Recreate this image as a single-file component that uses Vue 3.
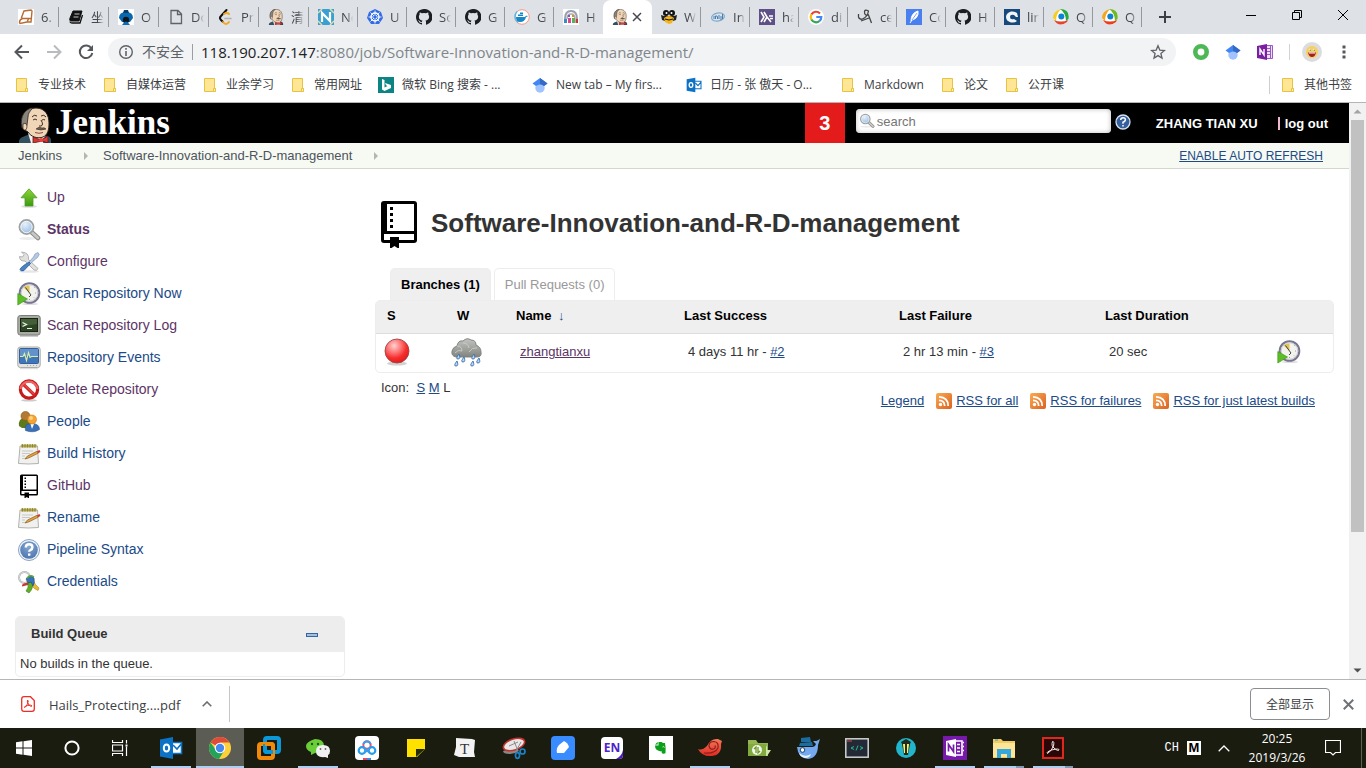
<script setup>
import { ref } from 'vue'

const tabs = [
  { icon: 'sketch', title: '6.' },
  { icon: 'book', title: '坐' },
  { icon: 'sailor', title: 'O' },
  { icon: 'page', title: 'Do' },
  { icon: 'leet', title: 'Pr' },
  { icon: 'butler', title: '清' },
  { icon: 'ntile', title: 'Ne' },
  { icon: 'helm', title: 'U' },
  { icon: 'github', title: 'So' },
  { icon: 'github', title: 'G' },
  { icon: 'docker', title: 'G' },
  { icon: 'crowd', title: 'H' },
  { icon: 'butler', title: '', active: true },
  { icon: 'gopher', title: 'W' },
  { icon: 'intel', title: 'In' },
  { icon: 'haskell', title: 'ha' },
  { icon: 'google', title: 'di' },
  { icon: 'script', title: 'ce' },
  { icon: 'feather', title: 'Co' },
  { icon: 'github', title: 'H' },
  { icon: 'cblue', title: 'lin' },
  { icon: 'swirlA', title: 'Q' },
  { icon: 'swirlB', title: 'Q' }
]

const bookmarks = [
  { icon: 'folder', label: '专业技术' },
  { icon: 'folder', label: '自媒体运营' },
  { icon: 'folder', label: '业余学习' },
  { icon: 'folder', label: '常用网址' },
  { icon: 'bing', label: '微软 Bing 搜索 - ...', wide: true },
  { icon: 'scholar', label: 'New tab – My firs...', wide: true },
  { icon: 'outlook', label: '日历 - 张 傲天 - O...', wide: true },
  { icon: 'folder', label: 'Markdown' },
  { icon: 'folder', label: '论文' },
  { icon: 'folder', label: '公开课' }
]

const tasks = [
  { icon: 'up', label: 'Up', visited: true },
  { icon: 'search', label: 'Status', visited: true, current: true },
  { icon: 'tools', label: 'Configure', visited: true },
  { icon: 'clock', label: 'Scan Repository Now' },
  { icon: 'terminal', label: 'Scan Repository Log', visited: true },
  { icon: 'monitor', label: 'Repository Events' },
  { icon: 'forbid', label: 'Delete Repository', visited: true },
  { icon: 'people', label: 'People' },
  { icon: 'notepad', label: 'Build History' },
  { icon: 'repo', label: 'GitHub', visited: true },
  { icon: 'notepad', label: 'Rename' },
  { icon: 'helpbig', label: 'Pipeline Syntax' },
  { icon: 'keys', label: 'Credentials' }
]

const apps = [
  { icon: 'outlook', name: 'Outlook', size: 's24', open: true },
  { icon: 'chrome', name: 'Chrome', size: 's24', current: true },
  { icon: 'vmware', name: 'VMware', size: 's24' },
  { icon: 'wechat', name: 'WeChat', size: 's24', open: true },
  { icon: 'cloud', name: 'Cloud drive', size: 's24' },
  { icon: 'sticky', name: 'Sticky notes', size: 's20' },
  { icon: 'typora', name: 'Typora', size: 's24' },
  { icon: 'snip', name: 'Snipping tool', size: 's24' },
  { icon: 'bluepen', name: 'Notes', size: 's24' },
  { icon: 'endict', name: 'Dictionary', size: 's24' },
  { icon: 'evernote', name: 'Evernote', size: 's24' },
  { icon: 'shell', name: 'Nautilus', size: 's24', open: true },
  { icon: 'gfolder', name: 'Sync folder', size: 's24' },
  { icon: 'whale', name: 'Kitematic', size: 's24' },
  { icon: 'code', name: 'Terminal', size: 's24' },
  { icon: 'lantern', name: 'Lantern', size: 's24' },
  { icon: 'onenote', name: 'OneNote', size: 's24', open: true },
  { icon: 'explorer', name: 'Explorer', size: 's24', open: true, stacked: true },
  { icon: 'acrobat', name: 'Acrobat', size: 's24', open: true, stacked: true }
]

const feeds = ['RSS for all', 'RSS for failures', 'RSS for just latest builds']
const query = ref('')
</script>

<template>
  <div class="screen">
    <svg class="sprite" aria-hidden="true">
      <defs>
        <linearGradient id="gGreen" x1="0" y1="0" x2="0" y2="1"><stop offset="0" stop-color="#8fd63a" /><stop offset="1" stop-color="#3b9a10" /></linearGradient>
        <linearGradient id="gCloud" x1="0" y1="0" x2="0" y2="1"><stop offset="0" stop-color="#c2c4c1" /><stop offset="1" stop-color="#82857f" /></linearGradient>
        <linearGradient id="gRss" x1="0" y1="0" x2="1" y2="1"><stop offset="0" stop-color="#f8ab52" /><stop offset="1" stop-color="#dd6121" /></linearGradient>
        <linearGradient id="gShell" x1="0" y1="0" x2="0" y2="1"><stop offset="0" stop-color="#f6795a" /><stop offset="1" stop-color="#e02a22" /></linearGradient>
        <radialGradient id="gBall" cx=".38" cy=".28" r=".75"><stop offset="0" stop-color="#ffd2d2" /><stop offset=".35" stop-color="#ff7f7f" /><stop offset=".7" stop-color="#f52c2c" /><stop offset="1" stop-color="#e01c1c" /></radialGradient>
        <radialGradient id="gLens" cx=".4" cy=".3" r=".8"><stop offset="0" stop-color="#e6f1fc" /><stop offset="1" stop-color="#8eb4e0" /></radialGradient>
        <radialGradient id="gHelp" cx=".5" cy=".3" r=".8"><stop offset="0" stop-color="#86a8d4" /><stop offset="1" stop-color="#4670a8" /></radialGradient>

        <symbol id="butler" viewBox="0 0 34 36">
          <path d="M1 36q-1-5 6-7l5-2h13l4 2q5 1 4 7z" fill="#335061" />
          <path d="M10 26l3 10h12l2-8-4-5z" fill="#f4f2ee" />
          <path d="M5 20C2 9 7 1 18 1c9 0 13 7 13 15 0 6-1 12-6 14-5 2-12 0-15-5-2-1-4-3-5-5z" fill="#f0d6b7" stroke="#2c2320" stroke-width="1" />
          <path d="M4 21C1 9 8 1 15 1c-3 3-5 5-5 9l-1 8-2 4z" fill="#88847c" stroke="#2c2320" stroke-width=".8" />
          <path d="M5 17q4-2 4 3-1 5-4 2z" fill="#f0d6b7" stroke="#2c2320" stroke-width=".7" />
          <path d="M14 10q2-3 5-1m4 0q3-2 5 1M15 13q2-2 4 0m5 0q2-1 3 0M23 13q3 5 0 6h-2" fill="none" stroke="#3a2b25" stroke-width="1" />
          <path d="M18 22q3-3 6-1 2-1 4 1-5 2-10 0z" fill="#6b5b50" stroke="#3a2b25" stroke-width=".6" />
          <path d="M17 25.500q4 1.500 8 0" fill="none" stroke="#8a4a3d" />
          <path d="M15 30l8 3 7-4v7l-6-2-9 2z" fill="#d33833" stroke="#641512" stroke-width=".8" />
          <circle cx="23" cy="33" r="2" fill="#ef3d3a" />
        </symbol>
        <symbol id="sketch" viewBox="0 0 16 16"><path fill="#fff" d="M0 0h16v16H0z" /><path d="M1.500 13.500q0-3 3-4l-1-1L6 2l7-1 1 1-1 11h-4l-7 1.500zM4 9.500h10M9 13l2-4" fill="none" stroke="#b66d35" stroke-width="1.400" /></symbol>
        <symbol id="book" viewBox="0 0 16 16"><path d="M5 2h9l-3 10H3q-2 0-1-3z" fill="#111" stroke="#111" stroke-linejoin="round" /><path d="M6.500 5h5M5.500 8h5" stroke="#ddd" stroke-width=".9" /><path d="M2 12.500q0 1.500 2 1.500h8l2.500-8" fill="none" stroke="#111" stroke-width="1.300" /></symbol>
        <symbol id="sailor" viewBox="0 0 16 16"><path fill="#fff" d="M0 0h16v16H0z" /><path d="M1 9q0-6 7-6t7 6l-3 4H4z" fill="#0868b0" /><path d="M6 1h4l1 3H5z" fill="#0a3d69" /><circle cx="8" cy="11" r="3.200" fill="#10151a" /><path d="M4 16q4-7 8 0z" fill="#086cb6" /></symbol>
        <symbol id="page" viewBox="0 0 16 16"><path d="M3 1.500h7l3.500 3.500v9.500H3zM9.500 1.500v4h4" fill="none" stroke="#5f6368" stroke-width="1.300" /></symbol>
        <symbol id="leet" viewBox="0 0 16 16"><path d="M8.500 1L3 7q-2 2 0 4l2 2" fill="none" stroke="#111" stroke-width="2" stroke-linecap="round" /><path d="M5 13q3 4 6 0m-5-8q3-2 5 0" fill="none" stroke="#f7a51c" stroke-width="2" stroke-linecap="round" /><path d="M7 9.500h6" stroke="#b3b3b3" stroke-width="1.700" stroke-linecap="round" /></symbol>
        <symbol id="ntile" viewBox="0 0 16 16"><path fill="#3aa0d1" d="M0 0h16v16H0z" /><path d="M0 4l4-4M12 0l4 4M0 12l4 4M16 12l-4 4" fill="none" stroke="#e4dca4" stroke-width="1.500" /><path d="M4 13V4l8 8V3" fill="none" stroke="#fff" stroke-width="2.200" /></symbol>
        <symbol id="helm" viewBox="0 0 16 16"><path d="M8 0l6 3 2 6-4 6H4L0 9l2-6z" fill="#326ce5" /><circle cx="8" cy="8" r="4" fill="none" stroke="#fff" stroke-width="1.400" /><path d="M8 1.500v13M1.500 8h13M3.500 3.500l9 9m0-9l-9 9" stroke="#fff" stroke-width=".9" /><circle cx="8" cy="8" r="1.400" fill="#326ce5" /></symbol>
        <symbol id="github" viewBox="0 0 16 16"><path d="M8 0C3.600 0 0 3.600 0 8c0 3.500 2.300 6.500 5.500 7.600.4.100.5-.2.500-.4v-1.400c-2.200.5-2.700-.9-2.700-.9-.4-1-.9-1.200-.9-1.200-.7-.5.100-.5.100-.5.800.1 1.200.8 1.200.8.700 1.300 1.900.9 2.300.7.100-.5.300-.9.500-1.100-1.800-.2-3.600-.9-3.600-4 0-.9.300-1.600.8-2.100-.1-.2-.4-1 .1-2.100 0 0 .7-.2 2.200.8a7.600 7.600 0 0 1 4 0c1.500-1 2.200-.8 2.200-.8.400 1.100.2 1.900.1 2.100.5.600.8 1.300.8 2.100 0 3.100-1.900 3.800-3.700 4 .3.200.6.700.6 1.500v2.200c0 .2.100.5.600.4A8 8 0 0 0 8 0z" fill="#1b1f23" /></symbol>
        <symbol id="docker" viewBox="0 0 16 16"><circle cx="8" cy="8" r="7.300" fill="#fff" stroke="#f59a8b" /><path d="M3 2.500a7.500 7.500 0 0 0 1 11" fill="none" stroke="#51b9e8" stroke-width="1.300" /><path d="M2 8h9q1-2 3-1-1 1-2 1-1 5-6 5-4 0-4-5zM4 5.500h5V7H4zM6 3.500h3V5H6z" fill="#1488c6" /></symbol>
        <symbol id="crowd" viewBox="0 0 16 16"><path fill="#fff" d="M0 0h16v16H0z" /><path d="M2 10q0-8 6-8t6 8" fill="none" stroke="#999fb0" stroke-width="2" /><path d="M4 10q0-5 4-5t4 5" fill="none" stroke="#aaa" stroke-width="1.500" /><path d="M1 10h3v4H1z" fill="#3a8bc9" /><path d="M5 9h3v5H5z" fill="#d94a8b" /><path d="M9 9h3v5H9z" fill="#56b45a" /><path d="M12.500 10H15v4h-2.500z" fill="#c43b3b" /><path d="M5 6h2v2H5z" fill="#7f56c2" /><path d="M9 6h2v2H9z" fill="#e58d2a" /></symbol>
        <symbol id="gopher" viewBox="0 0 16 16"><ellipse cx="5" cy="4" rx="3" ry="3" fill="#111" /><ellipse cx="11" cy="4" rx="3" ry="3" fill="#111" /><path d="M0 6l3 1h10l3-1-1 5-3 1H4l-3-1z" fill="#222" /><circle cx="5.500" cy="4" r="1" fill="#fff" /><circle cx="10.500" cy="4" r="1" fill="#fff" /><path d="M3 9q5-4 10 0l-2 5-3 1-4-2z" fill="#f3b51a" /><path d="M4 10q4 2 8 0" fill="none" stroke="#111" /></symbol>
        <symbol id="intel" viewBox="0 0 16 16"><ellipse cx="8" cy="8" rx="6.500" ry="4" fill="none" stroke="#7fa9cf" stroke-width="1.200" transform="rotate(-12 8 8)" /><path d="M4 7v3m1.500-3v3m0-3q2-.5 2 1v2M9 6v4m1-2h2m-2 2h2m.5-5v5" fill="none" stroke="#3277b0" stroke-width=".9" /></symbol>
        <symbol id="haskell" viewBox="0 0 16 16"><path fill="#5e5086" d="M0 0h16v16H0z" /><path d="M2 3l3 5-3 5M5 3l3 5-3 5m3-5l4 5M10 7h4m-3 2.500h3" fill="none" stroke="#fff" stroke-width="1.600" /></symbol>
        <symbol id="google" viewBox="0 0 16 16"><circle cx="8" cy="8" r="8" fill="#fff" /><path d="M12 4.500A5.300 5.300 0 0 0 3.400 5.500" fill="none" stroke="#ea4335" stroke-width="2.200" /><path d="M3.400 5.400a5.300 5.300 0 0 0 0 5.200" fill="none" stroke="#fbbc05" stroke-width="2.200" /><path d="M3.400 10.500a5.300 5.300 0 0 0 8.100 1.500" fill="none" stroke="#34a853" stroke-width="2.200" /><path d="M11.500 12q1.800-1.500 1.800-4H8.300" fill="none" stroke="#4285f4" stroke-width="2.200" /></symbol>
        <symbol id="script" viewBox="0 0 16 16"><path d="M1.500 5v3q1 3 4 2 5-2 6-8-4-2-4 1 0 4 4 3l3 8M4 12l8-3" fill="none" stroke="#444" stroke-width="1.300" /></symbol>
        <symbol id="feather" viewBox="0 0 16 16"><path fill="#4a7ff0" d="M0 0h16v16H0z" /><path d="M5 12q0-8 7-10 1 7-6 9zM4 14l2-3" fill="#fff" stroke="#fff" /><path d="M6 11l5-7" stroke="#4a7ff0" stroke-width=".7" /></symbol>
        <symbol id="cblue" viewBox="0 0 16 16"><path fill="#18497c" d="M0 0h16v16H0z" /><path d="M13 4Q11 2 7 2.500 2 4 2 8t5 5.500q4 .5 6-1.500l-3-2q-4 1-4-2t4-2l2 2h2z" fill="#f1f6fa" /></symbol>
        <symbol id="swirlA" viewBox="0 0 16 16"><circle cx="8" cy="8" r="7.500" fill="#fff" /><path d="M8 0Q0 2 0 9l3 3Q3 5 8 0z" fill="#f3ce24" /><path d="M7 0q10 0 8.500 10L13 12Q13 4 7 0z" fill="#27a844" /><path d="M1 11q5 8 13 2l1-2q-7 3-14 0z" fill="#e6452e" /><circle cx="8.300" cy="7.500" r="3" fill="#0d83cf" /></symbol>
        <symbol id="swirlB" viewBox="0 0 16 16"><circle cx="8" cy="8" r="7.500" fill="#fff" /><path d="M8 0Q0 2 0 9l3 3Q3 5 8 0z" fill="#f4a71e" /><path d="M7 0q10 0 8.500 10L13 12Q13 4 7 0z" fill="#6cba20" /><path d="M1 11q5 8 13 2l1-2q-7 3-14 0z" fill="#f03d19" /><circle cx="8.300" cy="7.500" r="3" fill="#0d83cf" /></symbol>

        <symbol id="folder" viewBox="0 0 16 16"><path d="M2.500 1.500h10v10h1v3h-11z" fill="#ffe694" stroke="#e6c342" /><path d="M11.500 14.500v-3h2v3z" fill="#fff0b8" stroke="#e6c342" /></symbol>
        <symbol id="bing" viewBox="0 0 16 16"><path fill="#0c8484" d="M0 0h16v16H0z" /><path d="M4 2l2.500 1v7.500L9.500 9 8 8.300 7 6l6 2v3l-6.500 3L4 12.500z" fill="#fff" /></symbol>
        <symbol id="scholar" viewBox="0 0 16 16"><circle cx="8" cy="11" r="4.700" fill="#a0c3ff" /><path d="M8 1L.5 6.500 4 9q4-3 8 0l3.500-2.500z" fill="#4285f4" /><path d="M8 1v6q2 0 4 2l3.500-2.500z" fill="#356ac3" /></symbol>
        <symbol id="outlook" viewBox="0 0 24 24"><path fill="#fff" d="M12 6h11v12H12z" /><path d="M12 6.500h10.500v11H12M14 9l4 4 5-6" fill="none" stroke="#0c72c6" stroke-width="1.600" /><path d="M1 3.500L14 1v22L1 20.500z" fill="#0c72c6" /><ellipse cx="7.500" cy="12" rx="2.700" ry="3.600" fill="none" stroke="#fff" stroke-width="2" /></symbol>
        <symbol id="onenote16" viewBox="0 0 16 16"><path d="M9 1.500h6.500v13H9M10 4.500h4m-4 3h4m-4 3h4M13.500 1.500v13" stroke="#9a58c4" fill="#ecdff5" /><path d="M0 2l10-2v16L0 14z" fill="#7a1fa2" /><path d="M3 11V5l4 6V5" fill="none" stroke="#fff" stroke-width="1.400" /></symbol>
        <symbol id="smile" viewBox="0 0 20 20"><circle cx="10" cy="10" r="10" fill="#dcdcde" /><circle cx="10" cy="10" r="6" fill="#f8cf5a" /><path d="M6 10.500h8q-1 4.500-4 4.500t-4-4.500z" fill="#a32020" /><path d="M7 10.500h6v1H7z" fill="#fff" /><circle cx="8" cy="8" r="1.200" fill="#fff" /><circle cx="12" cy="8" r="1.200" fill="#fff" /><circle cx="8.200" cy="8.200" r=".6" fill="#332" /><circle cx="12.200" cy="8.200" r=".6" fill="#332" /></symbol>

        <symbol id="up" viewBox="0 0 24 24"><ellipse cx="12" cy="20.500" rx="8" ry="1.300" fill="#ddd" /><path d="M12 2.800l8 9h-4V20H8v-8.200H4z" fill="url(#gGreen)" stroke="#4f9a26" stroke-width=".8" /></symbol>
        <symbol id="search" viewBox="0 0 24 24"><ellipse cx="11" cy="20.500" rx="9" ry="1.500" fill="#ececec" /><path d="M15 14.500l6 5.500" stroke="#8b8d8a" stroke-width="4.500" stroke-linecap="round" /><path d="M15 14.500l6 5.500" stroke="#c8c9c7" stroke-width="2.500" stroke-linecap="round" /><circle cx="9.500" cy="9" r="7" fill="url(#gLens)" stroke="#9fa19f" stroke-width="1.900" /><circle cx="9.500" cy="9" r="5.700" fill="none" stroke="#fff" stroke-width=".8" /></symbol>
        <symbol id="tools" viewBox="0 0 24 24"><ellipse cx="12" cy="21.500" rx="10" ry="1.300" fill="#e6e6e6" /><path d="M4.500 2L7 4.500 5.500 7 2.500 6.500q0 5 5.500 4.500l9 9q3 1.500 4-1.500l-9.500-9q1-7-7-7.500z" fill="#e0e1df" stroke="#a2a4a1" stroke-width=".8" /><path d="M21 2.500l-3 1.500-1.500 3L12 12l1.500 1.500L18.500 9l2-1.500 1.700-3z" fill="#b4cae2" stroke="#8aa1bd" stroke-width=".8" /><path d="M12 12l1.500 1.500L7 20.500q-3 1.500-4-1 0-2 9-7.500z" fill="#4a82c6" stroke="#2a5898" stroke-width=".8" /></symbol>
        <symbol id="clock" viewBox="0 0 24 24"><ellipse cx="13" cy="22" rx="8" ry="1" fill="#ddd" /><circle cx="12.500" cy="11" r="9.800" fill="#f3f3ee" stroke="#77758f" stroke-width="2" /><circle cx="12.500" cy="11" r="8.300" fill="none" stroke="#c9c8d3" /><path d="M12.500 11L6.500 5.500q3-2.500 6-2z" fill="#e0c45a" /><path d="M8.500 5.500l4 5.500 1.500 2-2 2" stroke="#333" stroke-width=".9" fill="none" /><path d="M18 11h1M12.500 17v1M17 6l.6-.6M17 15.500l.6.600" stroke="#888" stroke-width=".8" /><path d="M.8 11.500L10.500 17 .8 23z" fill="#5cbd27" stroke="#479c1b" stroke-width=".7" /></symbol>
        <symbol id="terminal" viewBox="0 0 24 24"><path d="M3 22h18" stroke="#ccc" stroke-width="2" /><rect x=".8" y="1.500" width="22.400" height="19.500" rx="2.500" fill="#a9aba5" stroke="#7b7d78" /><rect x="3.500" y="4.500" width="17" height="13" fill="#2c4424" stroke="#182410" /><path d="M4 5h16v5L4 12.500z" fill="#55704a" opacity=".6" /><path d="M5.500 8.500l4 2-4 2M10 14.500h5" fill="none" stroke="#eef5e8" stroke-width="1.200" /></symbol>
        <symbol id="monitor" viewBox="0 0 24 24"><path d="M3 22.500h18" stroke="#ddd" stroke-width="1.500" /><rect x=".8" y="1" width="22.400" height="20.500" rx="2.500" fill="#e2e3e0" stroke="#a9aba6" /><rect x="2.500" y="2.500" width="19" height="15" rx="1" fill="#3f76bb" stroke="#31609c" /><path d="M3 3h18v7H3z" fill="#7aa4d6" opacity=".6" /><path d="M3 10.500h3l1.500-3 2 7 2-8 1.500 5 1.500-1H21" fill="none" stroke="#d9efa0" stroke-width="1.100" /><path d="M10 19.500h10" stroke="#aaa" stroke-dasharray="1 2" /></symbol>
        <symbol id="forbid" viewBox="0 0 24 24"><ellipse cx="12" cy="22.300" rx="8" ry="1.200" fill="#ccc" /><circle cx="12" cy="11.500" r="8.600" fill="#fff" stroke="#c41a1a" stroke-width="3.200" /><path d="M6 6l12 11.500" stroke="#d42424" stroke-width="3.200" /><path d="M3.500 11A8.600 8.600 0 0 1 20.500 11" fill="none" stroke="#ee6464" stroke-width="2.200" /><path d="M7 6.500l10 9.500" stroke="#e04545" stroke-width="1.600" /></symbol>
        <symbol id="people" viewBox="0 0 24 24"><path d="M2 16q-1-8 6-8t7 8l-5 2H5z" fill="#5c7a1c" /><circle cx="8.500" cy="6" r="4.500" fill="#b37a34" stroke="#86500e" stroke-width=".6" /><path d="M8.500 20.500q-2-7 6-7t8 6q-6 4-14 1z" fill="#3a70b8" stroke="#28538c" stroke-width=".6" /><path d="M13.500 14l1.500 5 2-5z" fill="#fff" /><circle cx="15" cy="9.500" r="4.500" fill="#f5a431" stroke="#cb7a12" stroke-width=".6" /><circle cx="14" cy="8" r="2" fill="#ffd083" /></symbol>
        <symbol id="notepad" viewBox="0 0 24 24"><path d="M3 4h17.500l1 17.500q-10.500 1-20 0z" fill="#f0f0ee" stroke="#a9aaa6" stroke-width=".9" /><path d="M4 2.500h15.500v3H4z" fill="#b5a84a" /><path d="M5.500 2v3.500M8 2v3.500M10.500 2v3.500M13 2v3.500M15.500 2v3.500M18 2v3.500" stroke="#857b2c" stroke-width=".8" /><path d="M5 9h11M5 11.500h8M5 14h3M5 16.500h5" stroke="#c4c4c4" stroke-width=".9" /><path d="M8 17l2.500-3L20 9.300l1 2-9 4.500z" fill="#e0a142" stroke="#9a6b26" stroke-width=".8" /><path d="M20 9.300l2.500-1.300 1 2-2.500 1.300z" fill="#cd3b30" /></symbol>
        <symbol id="repo" viewBox="0 0 24 24"><path d="M4.500.5h15Q21 .5 21 2v18q0 1.500-1.500 1.500H12v3L9.750 23 7.500 24.500v-3h-3Q3 21.500 3 20V2Q3 .5 4.500.5z" fill="#000" /><path d="M6 2h13.500v13.500H6zM4.500 17h15v3H12v-1.500H7.500V20h-3z" fill="#fff" /><path d="M7.500 3.500H9V5H7.500zm0 3H9V8H7.500zm0 3H9V11H7.500zm0 3H9V14H7.500z" fill="#000" /></symbol>
        <symbol id="helpbig" viewBox="0 0 24 24"><circle cx="12" cy="12" r="10.500" fill="#f2f6fb" stroke="#87a2c7" /><circle cx="12" cy="12" r="8.800" fill="url(#gHelp)" /><path d="M8.800 9.500q0-3.200 3.300-3.200t3.300 3q0 2-2 2.700-1.200.5-1.200 1.800M12.200 15.500v2.300" fill="none" stroke="#fff" stroke-width="2.400" /></symbol>
        <symbol id="keys" viewBox="0 0 24 24"><circle cx="7.500" cy="7.500" r="5.500" fill="none" stroke="#9ea0a2" stroke-width="1.900" /><circle cx="7.500" cy="7.500" r="5.500" fill="none" stroke="#f0f0f0" stroke-width=".9" /><path d="M5 15.500q0-2 6-3l2 2-8 2z" fill="#c9382c" /><path d="M16 10q2 5 6 8l-1 2.500q-7-3-7-8.500z" fill="#e7bc32" stroke="#ad8517" stroke-width=".6" /><path d="M11 12q1 6-2 9l3 2q5-5 3-11z" fill="#5fae25" stroke="#3a7a10" stroke-width=".6" /><path d="M9 9q4-6 8-1 1 5-1 8l-2-4-3 1z" fill="#3673b9" stroke="#204a87" stroke-width=".6" /><path d="M10 8q3-4 7-1" fill="none" stroke="#5fae25" stroke-width="1.400" /></symbol>
        <symbol id="ball" viewBox="0 0 26 28"><ellipse cx="13" cy="25.500" rx="10" ry="2" fill="#d2d2d2" /><circle cx="13" cy="13" r="12" fill="url(#gBall)" stroke="#a14444" stroke-width=".9" /></symbol>
        <symbol id="rain" viewBox="0 0 32 30"><path d="M6 20q-5-1-4-6 1-4 5-5 1-6 6-5 4-4 8-1 5 0 5 5 5 2 5 7 1 5-4 5z" fill="url(#gCloud)" stroke="#7c7f79" stroke-width=".9" /><path d="M7 9q5 0 5 5M13 6q5 0 6 5M19 15q3-5 8-4M5 16q3-4 7-2" fill="none" stroke="#d0d2ce" stroke-width=".8" /><g fill="#bcd5f0" stroke="#3b70b2" stroke-width=".9"><path d="M9 17q-4 5-1 5t1-5zM14 20q-4 5-1 5t1-5zM7 24q-4 5-1 5t1-5zM24 17q-4 5-1 5t1-5zM29 21q-4 5-1 5t1-5zM23 24q-4 5-1 5t1-5z" /></g></symbol>
        <symbol id="rss" viewBox="0 0 16 16"><rect width="16" height="16" rx="2" fill="url(#gRss)" /><circle cx="4.500" cy="11.500" r="1.700" fill="#fff" /><path d="M3 7.300q5.700.2 5.700 5.700M3 3.800q9.200.4 9.200 9.200" fill="none" stroke="#fff" stroke-width="1.800" /></symbol>
        <symbol id="pdf" viewBox="0 0 14 16"><path d="M3 .7h6.500l3.800 3.800V13q0 2.300-2.300 2.300H3Q.7 15.300.7 13V3Q.7.700 3 .7z" fill="#fff" stroke="#ee2d24" stroke-width="1.300" /><path d="M6.500 4q1.500 0 0 4-2 3.500-3 3.500-1-1 3-2 4-1 4.500.5-1 1-3-1-2.500-3-1.500-5z" fill="none" stroke="#ee2d24" /></symbol>

        <symbol id="chrome" viewBox="0 0 24 24"><circle cx="12" cy="12" r="11" fill="#fdd03b" /><path d="M12 12L2.500 6.500A11 11 0 0 1 21.500 6.500H12z" fill="#df4a3b" /><path d="M2.500 6.500A11 11 0 0 0 11 23L16 15 8 14z" fill="#22a35a" /><circle cx="12" cy="12" r="5.300" fill="#fff" /><circle cx="12" cy="12" r="4.200" fill="#4788ee" /></symbol>
        <symbol id="vmware" viewBox="0 0 24 24"><rect x="8" y="2" width="14" height="14" rx="2" fill="none" stroke="#0c98d8" stroke-width="4" /><rect x="2" y="8" width="14" height="14" rx="2" fill="none" stroke="#f28a09" stroke-width="4" /><path d="M8 8v6q0 2 2 2h6" fill="none" stroke="#0c98d8" stroke-width="4" /><path d="M8 8h6q2 0 2 2v3" fill="none" stroke="#f28a09" stroke-width="4" /></symbol>
        <symbol id="wechat" viewBox="0 0 24 24"><path d="M9 3q9 0 9 7t-9 7l-4 2v-3Q0 14 0 10t9-7z" fill="#69ce38" /><circle cx="6" cy="8" r="1.200" fill="#245812" /><circle cx="12" cy="8" r="1.200" fill="#245812" /><path d="M17 9q7 0 7 6 0 3-2 4v3l-3-1q-9 1-9-6 0-6 7-6z" fill="#f0f2f1" /><circle cx="14.500" cy="13" r=".9" fill="#666" /><circle cx="19.500" cy="13" r=".9" fill="#666" /></symbol>
        <symbol id="cloud" viewBox="0 0 24 24"><rect width="24" height="24" rx="4" fill="#fff" /><circle cx="12" cy="9" r="3.700" fill="none" stroke="#ed526b" stroke-width="2" /><circle cx="7" cy="14.500" r="3.300" fill="none" stroke="#269dec" stroke-width="2.200" /><circle cx="17" cy="14.500" r="3.300" fill="none" stroke="#269dec" stroke-width="2.200" /><path d="M8.500 8a3.700 3.700 0 0 1 7 0M9 12l6 5m0-5l-6 5" fill="none" stroke="#389fec" stroke-width="2" /><path d="M8 22h4v2H8z" fill="#ef4562" /><path d="M12 22h4v2h-4z" fill="#2b90f0" /></symbol>
        <symbol id="sticky" viewBox="0 0 20 20"><path d="M1 1h18v10l-8 8H1z" fill="#ffe100" /><path d="M10 19v-8h9z" fill="#222a10" /></symbol>
        <symbol id="typora" viewBox="0 0 24 24"><path d="M3 2l16 1 3 1-1 12 1 5-16 0-5-2 2-8z" fill="#f2f2f2" /><text x="11.500" y="18" text-anchor="middle" font-size="15" font-family="Liberation Serif, serif" fill="#333">T</text></symbol>
        <symbol id="snip" viewBox="0 0 24 24"><path d="M1 15q0 3 7 3 5 0 9-3l-4-3z" fill="#888" /><ellipse cx="12" cy="8.500" rx="11" ry="5.500" fill="#e8e8e8" stroke="#c6322e" stroke-width="1.600" transform="rotate(-18 12 8.500)" /><path d="M12 5l4 10M19 6l-5 9M7 10l9-4" stroke="#8b8b8b" stroke-width="1" /><circle cx="20.500" cy="15.500" r="2.500" fill="none" stroke="#1c82c7" stroke-width="1.700" /><ellipse cx="15.500" cy="19.500" rx="2" ry="2.800" fill="none" stroke="#1c82c7" stroke-width="1.700" /></symbol>
        <symbol id="bluepen" viewBox="0 0 24 24"><rect width="24" height="24" rx="4" fill="#388cff" /><path d="M6 17q-1-5 2-8l5-4q4 2 5 6l-5 6z" fill="#fff" /></symbol>
        <symbol id="endict" viewBox="0 0 24 24"><rect x="1" y="1" width="22" height="22" rx="4" fill="#fff" /><path d="M23 14v5q0 4-4 4h-3q6-3 7-9z" fill="#4e1bc5" /><text x="12" y="16" text-anchor="middle" font-size="12" font-weight="700" font-family="Noto Sans, sans-serif" fill="#5022c9">EN</text></symbol>
        <symbol id="evernote" viewBox="0 0 24 24"><path fill="#fff" d="M0 0h24v24H0z" /><path d="M9.500 6h3l1.500 1h2q1 5 .5 10-1 1-3 .5-1.500-.5-.5-2-2 0-4-1-3-1-3-5h3.500zM6 8.500L8.700 6v2.500z" fill="#0a9e19" /><path d="M13.500 11q1.500-1 2 .5" fill="none" stroke="#fff" stroke-width=".8" /></symbol>
        <symbol id="shell" viewBox="0 0 24 24"><path d="M0 13q4 2 9-3 4-8 11-7l4 2-1 3q1 11-9 12Q4 21 0 13z" fill="url(#gShell)" /><path d="M6 17q11 1 14-5 1-6-4-6.500-5 0-5 4.500 1 4 4.500 3 2.500-1 1.500-3.500" fill="none" stroke="#8c1f1a" stroke-width="1.200" /></symbol>
        <symbol id="gfolder" viewBox="0 0 24 24"><path d="M1 4h8l2 3h10v13H1z" fill="#94b651" /><path d="M17 12l3-2v4h4l-4 6h-3z" fill="#cfe6a9" /><path d="M1 8h18v12H1z" fill="#82a840" /><circle cx="10" cy="14" r="5" fill="#f2f7e6" /><path d="M9 17v-6l-2 2m4-2v6l2-2" fill="none" stroke="#6b9630" stroke-width="1.300" /></symbol>
        <symbol id="whale" viewBox="0 0 24 24"><path d="M1 11h15q3 0 4-3l-3-3 3.500 0L24 3l-2 6q0 13-10 14Q2 22 1 11z" fill="#73a9ee" /><path d="M4 7l12-1 1 4H3zM5 2l9-1 1 5H5z" fill="#1c6c9f" /><path d="M3 17q6 5 12 1-1 4-6 4-5-1-6-5z" fill="#e7f4ff" /><circle cx="6.500" cy="14" r="2.300" fill="#fff" stroke="#164571" /></symbol>
        <symbol id="code" viewBox="0 0 24 24"><rect x=".8" y="2.800" width="22.400" height="18.400" fill="#242936" stroke="#cfd1d4" stroke-width="1.500" /><path d="M2 5h5" stroke="#f45c4c" stroke-width=".8" /><path d="M9 10.500l-3 1.500 3 1.500m6-3l3 1.500-3 1.500m-2-4l-2 5" fill="none" stroke="#25b893" /></symbol>
        <symbol id="lantern" viewBox="0 0 24 24"><circle cx="12" cy="12" r="10" fill="#21b6cb" /><path d="M7 6l5-3 5 3-1 2-2 11h-4L8 8z" fill="#202d1e" /><path d="M9 8h2v9h-1zm4 0h2l-1 9h-1z" fill="#fff158" /></symbol>
        <symbol id="onenote" viewBox="0 0 24 24"><path fill="#7719aa" d="M0 0h24v24H0z" /><path d="M13 5h6v14h-6M14 8.500h3m-3 3.500h3m-3 3.500h3M20 6.500h1m-1 4h1m-1 4h1" fill="none" stroke="#fff" stroke-width="1.600" /><path d="M3 5l10-2v18L3 19z" fill="#fff" /><path d="M5.500 15.500v-7l5 7v-7" fill="none" stroke="#7719aa" stroke-width="1.700" /></symbol>
        <symbol id="explorer" viewBox="0 0 24 24"><path d="M1 3h8l2 2h12v17H1z" fill="#f2cb62" /><path d="M3 4h3" stroke="#27a9df" /><path d="M1 7h22v14H1z" fill="#ffe596" /><path d="M5 22v-9h14v9h-4v-4H9v4z" fill="#36a7dc" /></symbol>
        <symbol id="acrobat" viewBox="0 0 24 24"><path fill="#2a0607" stroke="#e1261b" stroke-width="2" d="M2 2h20v20H2z" /><path d="M11.500 5.500q2-.5 1 4.500-2 5-6 7.500-2-1 4-3.500 8-2 7.500 0-1 1.500-5-2-3-2-1.500-6.500z" fill="none" stroke="#f3e8e8" stroke-width="1" /></symbol>
      </defs>
    </svg>

    <header class="tabstrip">
      <nav class="tabs" aria-label="Open tabs">
        <a v-for="(t, i) in tabs" :key="i" href="#" class="tab" :class="{ active: t.active, plain: i === 11, roomy: i < 6 }">
          <svg class="s16"><use :href="'#' + t.icon" /></svg>
          <svg v-if="t.active" class="tabclose" viewBox="0 0 10 10"><path d="M1 1l8 8m0-8l-8 8" stroke="#45494d" stroke-width="1.500" /></svg>
          <span v-else class="tabtitle">{{ t.title }}</span>
        </a>
      </nav>
      <button class="newtab" aria-label="New tab"><svg viewBox="0 0 12 12"><path d="M6 0v12M0 6h12" stroke="#3c4043" stroke-width="2" /></svg></button>
      <div class="wincontrols">
        <button aria-label="Minimize"><svg viewBox="0 0 10 10"><path d="M0 5.500h10" stroke="#000" /></svg></button>
        <button aria-label="Restore"><svg viewBox="0 0 10 10"><path d="M.5 2.500h7v7h-7zM2.500 2.500v-2h7v7h-2" fill="none" stroke="#000" /></svg></button>
        <button aria-label="Close"><svg viewBox="0 0 10 10"><path d="M0 0l10 10M10 0L0 10" stroke="#000" /></svg></button>
      </div>
    </header>

    <div class="toolbar">
      <button aria-label="Back"><svg viewBox="0 0 16 16"><path d="M15 8H2m6-6.500L1.500 8 8 14.500" fill="none" stroke="#54575b" stroke-width="2" /></svg></button>
      <button aria-label="Forward"><svg viewBox="0 0 16 16"><path d="M1 8h13M8 1.500L14.500 8 8 14.500" fill="none" stroke="#b9bbbd" stroke-width="2" /></svg></button>
      <button aria-label="Reload"><svg viewBox="0 0 16 16"><path d="M13.500 4.500A6.300 6.300 0 1 0 14.300 9" fill="none" stroke="#54575b" stroke-width="2" /><path d="M15 1v6H9z" fill="#54575b" /></svg></button>
      <div class="omnibox">
        <svg class="s16" viewBox="0 0 16 16"><circle cx="8" cy="8" r="6.300" fill="none" stroke="#5f6368" stroke-width="1.400" /><path d="M8 7v5M8 4v1.700" stroke="#5f6368" stroke-width="1.600" /></svg>
        <span class="insecure">不安全</span>
        <span class="url"><b>118.190.207.147</b>:8080/job/Software-Innovation-and-R-D-management/</span>
        <button class="star" aria-label="Bookmark"><svg viewBox="0 0 16 16"><path d="M8 1.800l1.800 4.300 4.700.4-3.600 3 1.100 4.600L8 11.600l-4 2.500 1.100-4.600-3.600-3 4.700-.4z" fill="none" stroke="#5f6368" stroke-width="1.300" /></svg></button>
      </div>
      <div class="extensions">
        <button aria-label="Extension"><svg viewBox="0 0 16 16"><circle cx="8" cy="8" r="5.700" fill="#fff" stroke="#4eb856" stroke-width="4.600" /></svg></button>
        <button aria-label="Scholar"><svg><use href="#scholar" /></svg></button>
        <button aria-label="OneNote clipper"><svg><use href="#onenote16" /></svg></button>
      </div>
      <button class="profile" aria-label="Profile"><svg><use href="#smile" /></svg></button>
      <button class="kebab" aria-label="Menu"><svg viewBox="0 0 16 16"><path d="M8 1.500v3M8 6.500v3M8 11.500v3" stroke="#54575b" stroke-width="3" /></svg></button>
    </div>

    <nav class="bookmarks" aria-label="Bookmarks">
      <a v-for="b in bookmarks" :key="b.label" href="#" class="bookmark"><svg class="s16"><use :href="'#' + b.icon" /></svg><span :class="{ wide: b.wide }">{{ b.label }}</span></a>
      <a href="#" class="bookmark other"><svg class="s16"><use href="#folder" /></svg><span>其他书签</span></a>
    </nav>

    <div class="viewport">
      <div class="page">
        <header class="jheader">
          <a href="#" class="logo"><svg><use href="#butler" /></svg><span>Jenkins</span></a>
          <a href="#" class="alerts">3</a>
          <form class="jsearch" @submit.prevent>
            <label for="q" aria-label="Search"><svg><use href="#search" /></svg></label>
            <input id="q" v-model="query" type="text" placeholder="search" />
          </form>
          <a href="#" class="jhelp" aria-label="Help"><svg viewBox="0 0 16 16"><circle cx="8" cy="8" r="7" fill="#36609b" stroke="#d6e1f0" stroke-width="1.300" /><path d="M5.700 6q0-2.300 2.400-2.300T10.400 6Q10 7.500 8 8.300v1.400m0 1.200v1.700" fill="none" stroke="#fff" stroke-width="1.500" /></svg></a>
          <a href="#" class="user">ZHANG TIAN XU</a>
          <span class="logout"><i></i><a href="#">log out</a></span>
        </header>

        <nav class="crumbs" aria-label="Breadcrumb">
          <a href="#">Jenkins</a><i class="arrow"></i><a href="#">Software-Innovation-and-R-D-management</a><i class="arrow"></i>
          <a href="#" class="refresh">ENABLE AUTO REFRESH</a>
        </nav>

        <div class="columns">
          <aside class="side">
            <nav class="tasks">
              <a v-for="t in tasks" :key="t.label" href="#" class="task" :class="{ visited: t.visited, current: t.current }"><svg class="s24"><use :href="'#' + t.icon" /></svg><span>{{ t.label }}</span></a>
            </nav>
            <section class="queue">
              <h2>Build Queue<button aria-label="Collapse"></button></h2>
              <p>No builds in the queue.</p>
            </section>
          </aside>

          <main class="main">
            <h1><svg><use href="#repo" /></svg><span>Software-Innovation-and-R-D-management</span></h1>
            <div class="views">
              <a href="#" class="view on">Branches (1)</a><a href="#" class="view">Pull Requests (0)</a>
            </div>
            <div class="frame">
              <table>
                <colgroup><col class="cs" /><col class="cw" /><col class="cn" /><col class="cl" /><col class="cf" /><col class="cd" /><col class="cb" /></colgroup>
                <thead><tr><th>S</th><th>W</th><th>Name <span class="sort">↓</span></th><th>Last Success</th><th>Last Failure</th><th>Last Duration</th><th></th></tr></thead>
                <tbody>
                  <tr>
                    <td class="state"><svg class="ball"><use href="#ball" /></svg></td>
                    <td class="weather"><svg class="rain"><use href="#rain" /></svg></td>
                    <td><a href="#" class="visited">zhangtianxu</a></td>
                    <td>4 days 11 hr - <a href="#">#2</a></td>
                    <td>2 hr 13 min - <a href="#">#3</a></td>
                    <td>20 sec</td>
                    <td><button class="build" aria-label="Schedule a build"><svg class="s24"><use href="#clock" /></svg></button></td>
                  </tr>
                </tbody>
              </table>
            </div>
            <div class="below">
              <p class="sizes">Icon: &nbsp;<a href="#">S</a> <a href="#">M</a> L</p>
              <div class="legend">
                <a href="#">Legend</a>
                <span v-for="f in feeds" :key="f" class="feed"><svg class="s16"><use href="#rss" /></svg><a href="#">{{ f }}</a></span>
              </div>
            </div>
          </main>
        </div>
      </div>
      <div class="scrollbar">
        <svg viewBox="0 0 17 17"><path d="M8.500 6.500l4 4h-8z" fill="#a3a3a3" /></svg>
        <div class="track"><div class="thumb"></div></div>
        <svg viewBox="0 0 17 17"><path d="M8.500 10.500l4-4h-8z" fill="#505050" /></svg>
      </div>
    </div>

    <footer class="downloads">
      <a href="#" class="file"><svg class="pdf"><use href="#pdf" /></svg><span>Hails_Protecting....pdf</span></a>
      <button class="more" aria-label="Download options"><svg viewBox="0 0 10 6"><path d="M.7 5.300L5 1l4.300 4.300" fill="none" stroke="#6b6e71" stroke-width="1.600" /></svg></button>
      <button class="showall">全部显示</button>
      <button class="dismiss" aria-label="Close downloads"><svg viewBox="0 0 10 10"><path d="M.7.700l8.600 8.600M9.300.700L.7 9.300" stroke="#6f7275" stroke-width="1.800" /></svg></button>
    </footer>

    <div class="taskbar">
      <button class="sys" aria-label="Start"><svg class="s16" viewBox="0 0 16 16"><path d="M0 2.200L6.500 1.300v6.200H0zM7.500 1.200L16 0v7.500H7.500zM0 8.500h6.500v6.200L0 13.800zM7.500 8.500H16V16l-8.500-1.200z" fill="#fff" /></svg></button>
      <button class="sys" aria-label="Cortana"><svg class="s16" viewBox="0 0 16 16"><circle cx="8" cy="8" r="6.600" fill="none" stroke="#fff" stroke-width="2" /></svg></button>
      <button class="sys last" aria-label="Task view"><svg class="s16" viewBox="0 0 16 16"><path d="M.5 0v2.500h10V0M.5 16v-2.500h10V16M.5 5h10v6H.5zM14.500 0v3.500m0 3V16" fill="none" stroke="#fff" stroke-width="1.200" /><path d="M13.500 4.500h2v2h-2z" fill="#fff" /></svg></button>
      <button v-for="a in apps" :key="a.name" class="app" :class="{ open: a.open, current: a.current, stacked: a.stacked }" :aria-label="a.name"><svg :class="a.size"><use :href="'#' + a.icon" /></svg></button>
      <div class="tray">
        <span class="lang">CH</span>
        <span class="ime">M</span>
        <svg class="chev" viewBox="0 0 12 7"><path d="M.7 6.300L6 1l5.300 5.300" fill="none" stroke="#fff" stroke-width="1.300" /></svg>
        <div class="time"><span>20:25</span><span>2019/3/26</span></div>
        <svg class="note s16" viewBox="0 0 16 16"><path d="M.5.500h15v12h-5L8 15l-2.500-2.500h-5z" fill="none" stroke="#fff" stroke-width="1.200" /></svg>
        <i class="peek"></i>
      </div>
    </div>
  </div>
</template>

<style>
body { overflow: hidden; background: #fff; }
</style>

<style scoped>
.screen, .screen * { box-sizing: border-box; }
.screen { height: 100vh; display: flex; flex-direction: column; font-family: "Open Sans", "Noto Sans CJK SC", sans-serif; font-size: 12px; color: #333; overflow: hidden; }
.sprite { position: absolute; width: 0; height: 0; }
svg { display: block; flex: none; }
button { border: 0; padding: 0; background: none; font: inherit; display: flex; align-items: center; justify-content: center; flex: none; }
a { text-decoration: none; color: inherit; }
.s16 { width: 16px; height: 16px; }
.s20 { width: 20px; height: 20px; }
.s24 { width: 24px; height: 24px; }

.tabstrip { height: 34px; flex: none; display: flex; background: #dee1e6; padding-left: 9px; }
.tabs { flex: 1; display: flex; min-width: 0; }
.tab { flex: 1 1 49px; min-width: 0; display: flex; align-items: center; gap: 7px; padding-left: 9px; position: relative; }
.tab.roomy { flex-basis: 50px; }
.tab::after { content: ""; position: absolute; right: 0; top: 7px; width: 1px; height: 20px; background: #95989c; }
.tab.active::after, .tab.plain::after { display: none; }
.tab.active { background: #fff; border-radius: 8px 8px 0 0; gap: 4px; }
.tabclose { width: 10px; height: 10px; }
.tabtitle { flex: 1; overflow: hidden; white-space: nowrap; font-size: 13px; line-height: 20px; color: #45494d; margin-right: 5px; mask-image: linear-gradient(90deg, #000 50%, transparent); }
.newtab { width: 46px; }
.newtab svg { width: 12px; height: 12px; }
.wincontrols { display: flex; height: 29px; margin-left: 40px; }
.wincontrols button { width: 46px; }
.wincontrols svg { width: 10px; height: 10px; }

.toolbar { height: 36px; flex: none; display: flex; align-items: center; padding: 0 6px; }
.toolbar > button { width: 32px; height: 32px; }
.toolbar button svg { width: 16px; height: 16px; }
.omnibox { flex: 1; height: 28px; margin-left: 6px; border-radius: 14px; background: #f1f3f4; display: flex; align-items: center; padding: 0 10px; min-width: 0; }
.insecure { font-size: 14px; color: #5f6368; margin-left: 8px; padding-right: 8px; border-right: 1px solid #9a9da1; line-height: 16px; }
.url { flex: 1; margin-left: 8px; font-size: 15px; line-height: 20px; color: #80868b; white-space: nowrap; overflow: hidden; }
.url b { font-weight: 400; color: #202124; }
.extensions { display: flex; gap: 16px; margin-left: 17px; padding-right: 16px; border-right: 1px solid #d0d2d5; }
.toolbar > .profile { margin-left: 6px; }
.toolbar .profile svg { width: 20px; height: 20px; }

.bookmarks { height: 33px; flex: none; display: flex; align-items: center; gap: 16px; padding: 0 14px 2px; border-bottom: 1px solid #b6b4b6; }
.bookmark { display: flex; align-items: center; gap: 8px; white-space: nowrap; color: #3c4043; line-height: 18px; }
.wide { width: 114px; overflow: hidden; }
.other { margin-left: auto; border-left: 1px solid #ccced1; padding-left: 10px; }

.viewport { flex: 1; min-height: 0; display: flex; font-family: "Liberation Sans", Arial, sans-serif; font-size: 13px; }
.page { flex: 1; min-width: 0; overflow: hidden; background: #fff; }
.scrollbar { width: 17px; background: #f1f1f1; display: flex; flex-direction: column; }
.scrollbar svg { width: 17px; height: 17px; }
.track { flex: 1; padding: 0 2px; }
.thumb { height: 76%; background: #c1c1c1; }

.jheader { height: 40px; background: #000; display: flex; align-items: center; color: #fff; padding: 0 21px 0 18px; font-weight: 700; }
.logo { display: flex; align-items: flex-end; gap: 3px; height: 40px; margin-right: auto; }
.logo svg { width: 34px; height: 36px; }
.logo span { font-family: "Liberation Serif", Georgia, serif; font-size: 35px; line-height: 40px; }
.alerts { width: 40px; height: 40px; background: #e31b1b; font-size: 20px; line-height: 40px; text-align: center; }
.jsearch { position: relative; width: 255px; margin: 0 4px 4px 11px; }
.jsearch label { position: absolute; left: 3px; top: 4px; }
.jsearch label svg { width: 16px; height: 16px; }
.jsearch input { display: block; width: 100%; height: 24px; border: 0; border-radius: 4px; padding: 0 8px 0 21px; background: #fff; box-shadow: inset 0 0 5px #bbb; font: 13px "Liberation Sans", Arial, sans-serif; color: #333; }
.jsearch input::placeholder { color: #757575; opacity: 1; }
.jhelp { margin-bottom: 2px; }
.jhelp svg { width: 16px; height: 16px; }
.user { margin-left: 25px; }
.logout { display: flex; align-items: center; gap: 5px; margin-left: 20px; }
.logout i { width: 2px; height: 13px; background: #f3b6cf; }

.crumbs { height: 26px; background: #f6faf2; border-bottom: 1px solid #d3d7cf; display: flex; align-items: center; padding: 0 26px 0 18px; color: #4d545d; }
.arrow { border-left: 4px solid #b4b6b2; border-top: 4px solid transparent; border-bottom: 4px solid transparent; margin: 0 15px 0 22px; }
.refresh { margin-left: auto; text-decoration: underline; color: #204a87; font-size: 12px; }

.columns { display: flex; align-items: flex-start; }
.side { width: 345px; flex: none; padding: 12px 0 0 15px; }
.tasks { padding-left: 2px; }
.task { display: flex; align-items: center; gap: 6px; height: 32px; font-size: 14px; color: #204a87; }
.task svg { align-self: flex-end; margin-bottom: 3px; overflow: visible; }
.task.visited, .visited { color: #5c3566; }
.task.current { font-weight: 700; }
.queue { margin-top: 19px; border: 1px solid #ededed; border-radius: 5px; overflow: hidden; }
.queue h2 { margin: 0; height: 35px; background: #ededed; display: flex; align-items: center; justify-content: space-between; padding: 0 26px 2px 15px; font-size: 13px; }
.queue button { width: 12px; height: 4px; margin-top: 2px; border: 1px solid #3465a4; background: #a5bfde; }
.queue p { margin: 0; padding: 0 4px; line-height: 24px; }

.main { flex: 1; min-width: 0; padding: 31px 15px 0 30px; }
h1 { margin: 0; display: flex; align-items: center; gap: 8px; height: 48px; font-size: 26px; line-height: 32px; color: #333; }
h1 span { padding-bottom: 2px; }
h1 svg { width: 48px; height: 48px; }
.views { display: flex; gap: 3px; padding-left: 15px; margin-top: 20px; }
.view { height: 32px; line-height: 32px; padding: 0 10px; border: 1px solid #ededed; border-bottom: 0; border-radius: 5px 5px 0 0; color: #999; }
.view.on { background: #efefef; color: #000; font-weight: 700; }
.frame { border: 1px solid #ededed; border-radius: 5px; overflow: hidden; }
table { width: 100%; border-collapse: collapse; table-layout: fixed; }
.cs { width: 70px; } .cw { width: 59px; } .cn { width: 168px; } .cl { width: 215px; } .cf { width: 206px; } .cd { width: 168px; } .cb { width: 73px; }
th { height: 32px; padding: 0 0 2px 11px; text-align: left; background: #efefef; color: #000; border-bottom: 1px solid #ddd; white-space: nowrap; }
.sort { color: #204a87; margin-left: 3px; font-weight: 400; }
td { height: 39px; padding: 0 0 2px 15px; white-space: nowrap; }
td.state { padding-left: 8px; }
td.weather { padding-left: 4px; }
.ball { width: 26px; height: 28px; }
.rain { width: 32px; height: 30px; }
td a, .below a { color: #204a87; text-decoration: underline; }
td a.visited { color: #5c3566; }
.below { display: flex; justify-content: space-between; align-items: flex-start; padding: 4px 19px 0 6px; }
.sizes { margin: 0; line-height: 22px; }
.legend { display: flex; align-items: center; gap: 12px; padding-top: 14px; line-height: 20px; }
.feed { display: flex; align-items: center; gap: 4px; }

.downloads { height: 49px; flex: none; border-top: 1px solid #b6b6b6; background: #fff; display: flex; align-items: center; padding-right: 12px; }
.file { display: flex; align-items: center; gap: 14px; padding: 0 4px 0 21px; font-size: 13px; color: #3c4043; }
.file span { padding-top: 2px; }
.pdf { width: 14px; height: 16px; }
.more { width: 46px; height: 36px; border-right: 1px solid #c4c6c8; }
.more svg { width: 10px; height: 6px; }
.showall { width: 80px; height: 32px; margin-left: auto; border: 1px solid #8a8d91; border-radius: 4px; color: #3c4043; }
.dismiss { margin-left: 13px; }
.dismiss svg { width: 11px; height: 11px; }

.taskbar { height: 40px; flex: none; background: #1b1c10; display: flex; color: #fff; }
.sys { width: 48px; }
.sys.last { margin-right: 2px; }
.app { width: 48px; margin-left: 1px; position: relative; }
.app.current { background: #5b5c54; }
.app.open::after, .app.current::after { content: ""; position: absolute; left: 4px; right: 4px; bottom: 0; height: 2px; background: #a9cff5; }
.app.current::after { left: 0; right: 0; }
.app.stacked::after { background: linear-gradient(90deg, #a9cff5 32px, #7e9ab5 32px); }
.tray { margin-left: auto; display: flex; align-items: center; padding-right: 4px; }
.lang { font: 12px "Liberation Mono", monospace; margin-right: 8px; }
.ime { width: 14px; height: 14px; background: #fff; color: #000; font: 700 13px/14px "Liberation Sans", sans-serif; text-align: center; margin-right: 17px; }
.chev { width: 12px; height: 7px; margin-right: 16px; }
.time { width: 62px; display: flex; flex-direction: column; align-items: center; line-height: 19px; margin-right: 17px; }
.peek { width: 1px; height: 40px; margin-left: 20px; background: #5e5f56; }
</style>
